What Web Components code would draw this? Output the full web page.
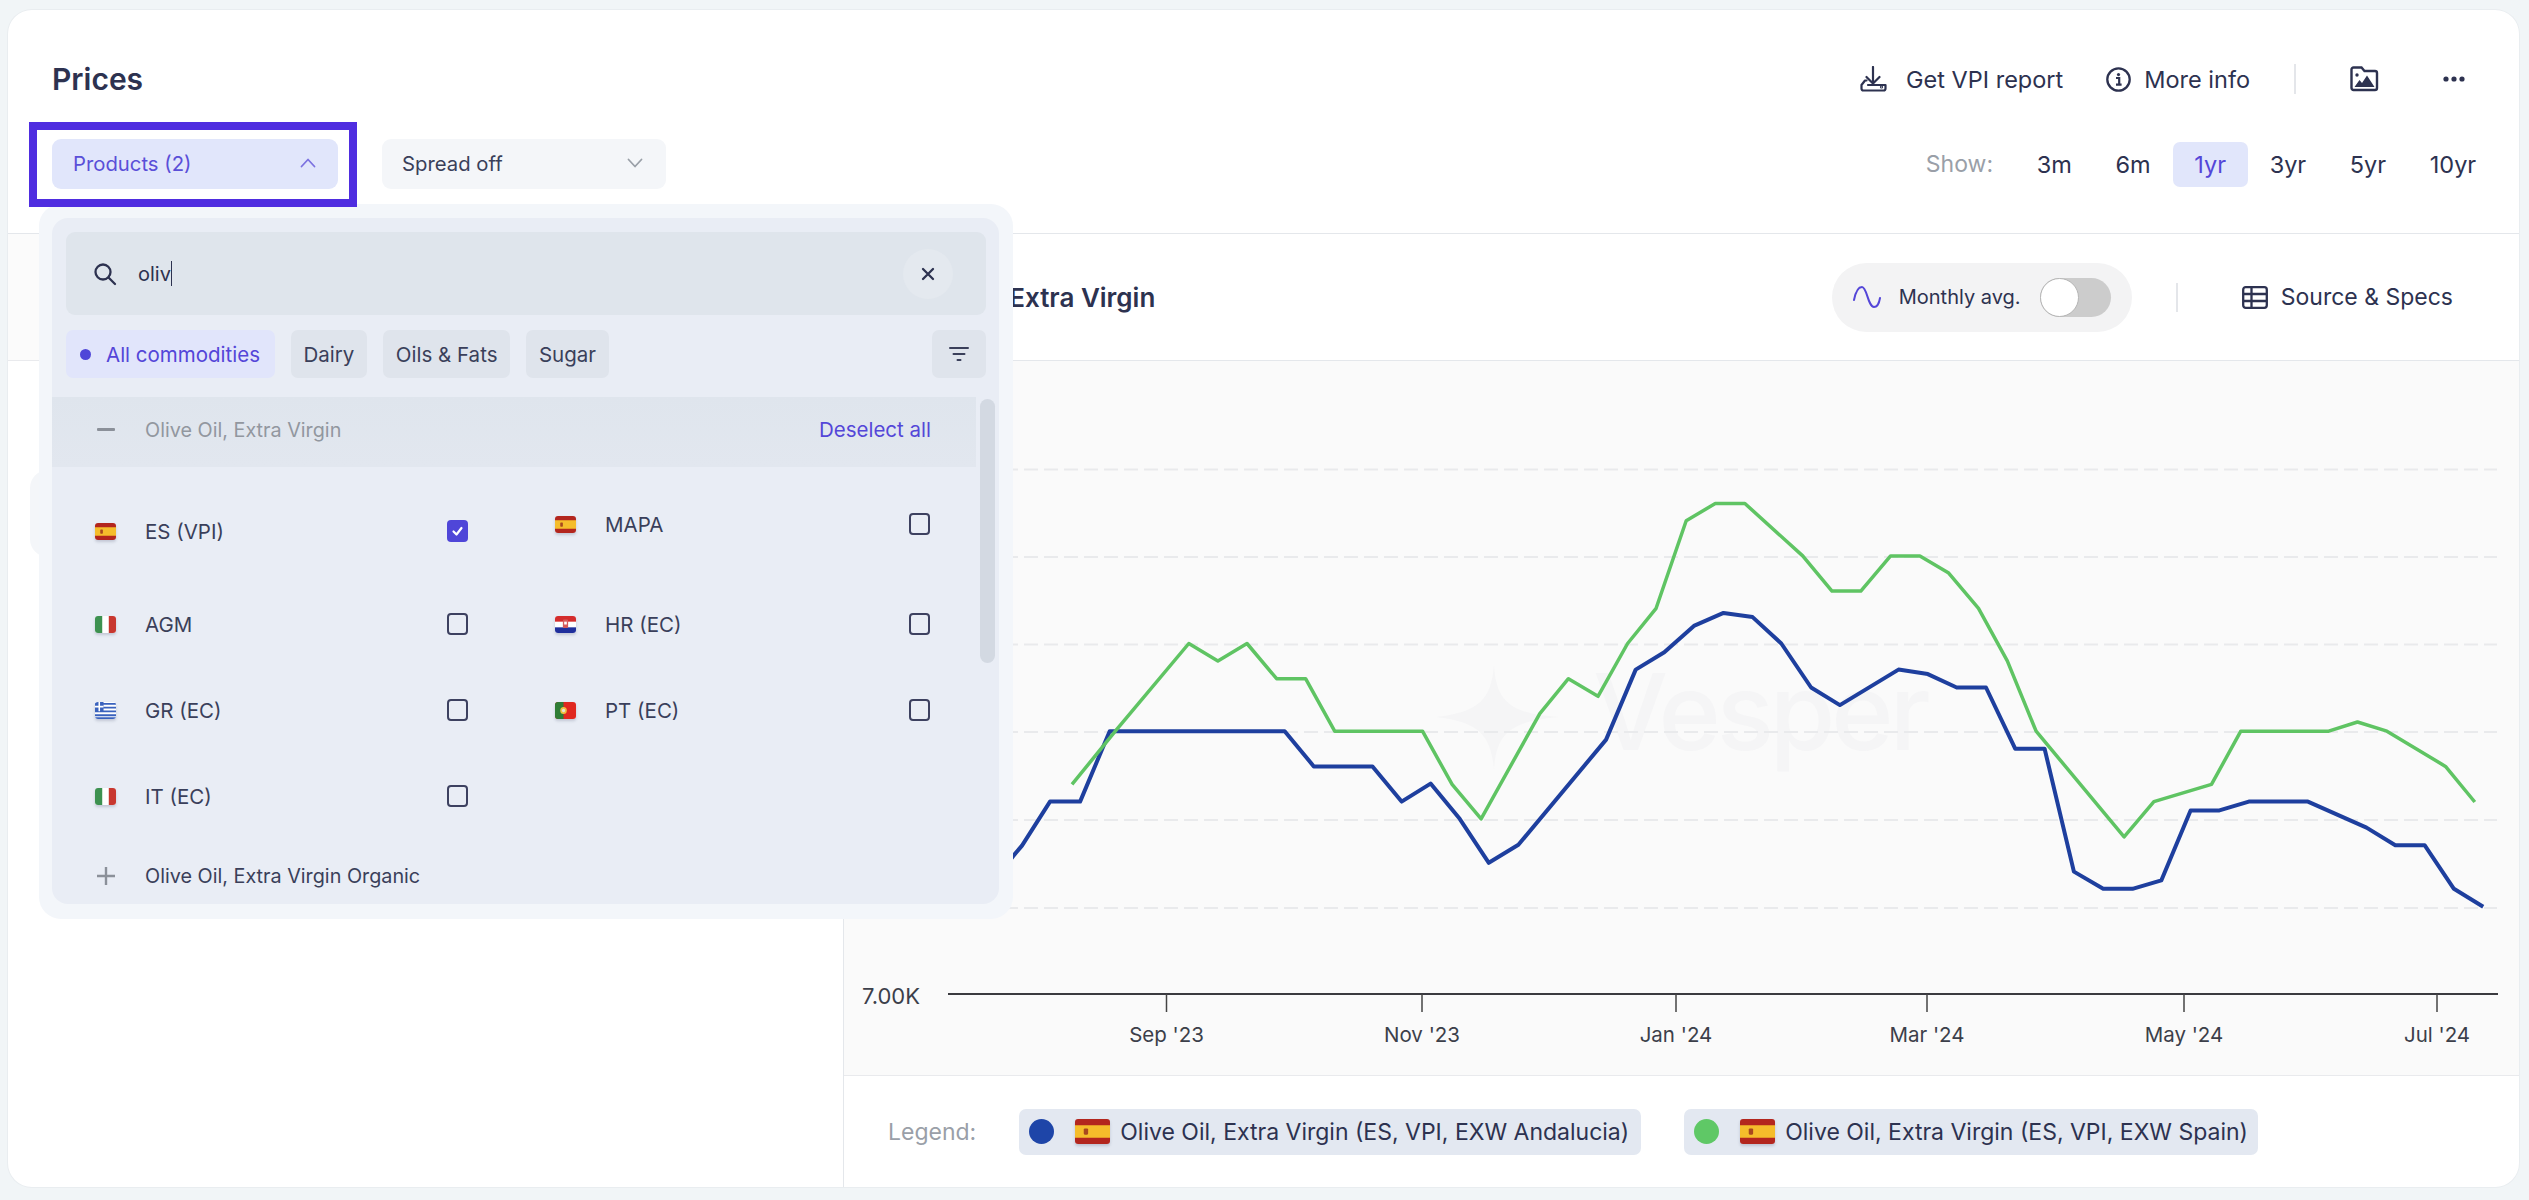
<!DOCTYPE html>
<html lang="en"><head><meta charset="utf-8"><title>Prices</title>
<style>
html,body{margin:0;padding:0}
body{background:#f1f5f7;font-family:Inter,"Noto Sans",sans-serif;color:#2d3250;width:2529px;height:1200px;overflow:hidden}
</style></head><body>
<price-app></price-app>
<script>
function def(name,html,init){
  customElements.define(name,class extends HTMLElement{
    constructor(){super();this.attachShadow({mode:'open'}).innerHTML=typeof html==='function'?html(this):html;}
    connectedCallback(){if(init&&!this._i){this._i=1;init(this);}}
  });
}
const I={
 dl:'<svg width="27" height="26" viewBox="0 0 27 26" fill="none" stroke="#2d3250" stroke-width="2.2" stroke-linecap="round" stroke-linejoin="round"><path d="M13 1v16.500M6.500 11l6.500 6.500L19.500 11"/><path d="M6.500 14.500H5L1.500 19v3.500a2 2 0 0 0 2 2h20a2 2 0 0 0 2-2V19H8"/><circle cx="21.500" cy="21" r=".5"/></svg>',
 info:'<svg width="25" height="25" viewBox="0 0 25 25" fill="none"><circle cx="12.500" cy="12.500" r="11.200" stroke="#2d3250" stroke-width="2.300"/><circle cx="12.500" cy="7.600" r="1.600" fill="#2d3250"/><path d="M10 11h3.200v6.200M10 17.600h5.600" stroke="#2d3250" stroke-width="2.200"/></svg>',
 folder:'<svg width="29" height="26" viewBox="0 0 29 26" fill="none"><path d="M1.500 3.500a2 2 0 0 1 2-2h8l3 3.500h10.500a2 2 0 0 1 2 2v15a2 2 0 0 1-2 2h-21.500a2 2 0 0 1-2-2z" stroke="#2d3250" stroke-width="2.400"/><circle cx="7" cy="9" r="1.700" fill="#2d3250"/><path d="M4.500 21l5-7 2.500 3 5-7.500 7.500 11.500z" fill="#2d3250"/></svg>',
 dots:'<svg width="22" height="6" viewBox="0 0 22 6" fill="#2d3250"><circle cx="3" cy="3" r="2.600"/><circle cx="11" cy="3" r="2.600"/><circle cx="19" cy="3" r="2.600"/></svg>',
 table:'<svg width="26" height="23" viewBox="0 0 26 23" fill="none" stroke="#2d3250" stroke-width="2.300"><rect x="1.200" y="1.200" width="23.600" height="20.600" rx="2.500"/><path d="M1 8h24M1 15h24M9.500 1.500v20"/></svg>',
 wave:'<svg width="28" height="24" viewBox="0 0 28 24" fill="none" stroke="#5446d8" stroke-width="2" stroke-linecap="round"><path d="M1 15C3 5 6 2 9 2c5 0 6 20 12 20 3 0 5-3 6-9"/></svg>',
 caret:(c,up)=>`<svg width="16" height="10" viewBox="0 0 16 10" fill="none" stroke="${c}" stroke-width="1.800" stroke-linecap="round" stroke-linejoin="round"><path d="${up?'M1.500 8.500 8 1.500l6.500 7':'M1.500 1.500 8 8.500l6.500-7'}"/></svg>`
};
const flags={
 es:'<rect width="32" height="24" fill="#b3261e"/><rect y="6" width="32" height="12" fill="#f5bd2b"/><rect x="8" y="9" width="4" height="6" rx="1" fill="#a8481f"/>',
 it:'<rect width="32" height="24" fill="#fff"/><rect width="11" height="24" fill="#3d9150"/><rect x="21" width="11" height="24" fill="#c8372f"/>',
 gr:'<rect width="32" height="24" fill="#fff"/><path d="M0 2.700h32M0 8h32M0 13.300h32M0 18.700h32M0 23h32" stroke="#3a62bd" stroke-width="2.600"/><rect width="13" height="13" fill="#3a62bd"/><path d="M6.500 0v13M0 6.500h13" stroke="#fff" stroke-width="2.400"/>',
 hr:'<rect width="32" height="24" fill="#fff"/><rect width="32" height="8" fill="#d42c2c"/><rect y="16" width="32" height="8" fill="#1f2f9c"/><rect x="12" y="5" width="8" height="12" rx="2" fill="#d65b5b"/><rect x="14" y="8" width="4" height="4" fill="#fff"/>',
 pt:'<rect width="32" height="24" fill="#e0281f"/><rect width="13" height="24" fill="#2f7d35"/><circle cx="13" cy="12" r="5" fill="#f0c040"/><circle cx="13" cy="12" r="2.500" fill="#e8e2d8"/>'
};
def('x-flag',h=>{const w=h.getAttribute('w')||21,ht=h.getAttribute('h')||17;return `<style>:host{display:block;flex:none;width:${w}px;height:${ht}px;line-height:0}
svg{display:block;border-radius:3px;box-shadow:0 2px 3px rgba(60,70,100,.22)}</style><svg width="${w}" height="${ht}" viewBox="0 0 32 24" preserveAspectRatio="none">${flags[h.getAttribute('code')]}</svg>`});
def('x-check',h=>`<style>:host{display:block;flex:none;width:21px;height:22px;box-sizing:border-box;border-radius:4px;${h.hasAttribute('checked')?'background:#4f46d8':'border:2.500px solid #3d4160'}}
svg{display:block}</style>${h.hasAttribute('checked')?'<svg width="21" height="22" viewBox="0 0 21 22" fill="none" stroke="#fff" stroke-width="2.200" stroke-linecap="round" stroke-linejoin="round"><path d="M6.500 11.500l3 3 5-6.500"/></svg>':''}`);
def('x-option',h=>`<style>:host{display:flex;align-items:center;height:100%;box-sizing:border-box;padding-top:${h.getAttribute('shift')||0}px;font-size:20.500px;color:#3a3f5a}
x-flag{margin-right:29px}.t{flex:1;white-space:nowrap}</style><x-flag code="${h.getAttribute('code')}"></x-flag><span class="t"><slot></slot></span><x-check ${h.hasAttribute('checked')?'checked':''}></x-check>`);
def('x-chip',h=>{const a=h.hasAttribute('active');return `<style>:host{display:flex;align-items:center;height:48px;box-sizing:border-box;padding:0 ${a?15:13}px 0 ${a?14:13}px;border-radius:7px;font-size:20.500px;white-space:nowrap;background:${a?'#e1e5fb':'#dfe4ec'};color:${a?'#5446d8':'#3a3f5a'}}
i{width:11px;height:11px;border-radius:50%;background:#4f46d8;margin-right:15px}</style>${a?'<i></i>':''}<slot></slot>`});
def('x-range',h=>{const a=h.hasAttribute('active');return `<style>:host{display:flex;align-items:center;height:45px;padding:0 21.800px;border-radius:7px;font-size:23.500px;white-space:nowrap;background:${a?'#e1e6fb':'transparent'};color:${a?'#5446d8':'#2d3250'}}</style><slot></slot>`});
def('x-select',h=>{const a=h.hasAttribute('active');return `<style>:host{display:flex;position:relative;align-items:center;justify-content:space-between;box-sizing:border-box;width:${a?286:284}px;height:50px;padding:0 ${a?22:23}px 2px ${a?21:20}px;border-radius:9px;font-size:20.300px;white-space:nowrap;background:${a?'#e1e6fb':'#f4f6f9'};color:${a?'#5a4fd8':'#3a3f5a'}}
.hl{position:absolute;left:-23px;top:-17px;right:-19px;bottom:-18px;border:8px solid #4f2de0;pointer-events:none}</style><span><slot></slot></span>${I.caret(a?'#7c72e0':'#9aa0a8',a)}${a?'<div class="hl"></div>':''}`});
def('x-legend',h=>`<style>:host{display:flex;align-items:center;height:46px;box-sizing:border-box;padding:0 ${h.getAttribute('pr')||12}px 0 10px;border-radius:7px;background:#e3e8f1;font-size:23px;color:#2d3250;white-space:nowrap}
i{width:25px;height:25px;border-radius:50%;background:${h.getAttribute('color')};margin-right:21px}x-flag{margin-right:10px}</style><i></i><x-flag code="es" w="35" h="25"></x-flag><slot></slot>`);

def('x-header',`<style>:host{display:block;position:relative;z-index:6;height:223px;box-sizing:border-box;padding-top:44px}
.r1{display:flex;align-items:center;height:50px;padding:0 54px 0 44px}
h1{margin:0;font-size:30px;font-weight:600;color:#2d3250;flex:1}
.a{display:flex;align-items:center;font-size:23.500px;white-space:nowrap}
.div{width:2px;height:30px;background:#e4e6ea}
.r2{display:flex;align-items:center;justify-content:space-between;height:50px;margin-top:35px;padding:0 0 0 44px}
.l{display:flex;gap:44px}.rr{display:flex;align-items:center;padding-right:21px}
.show{font-size:23px;color:#9a9fa8;margin-right:22px}
svg{display:block}
</style>
<div class="r1"><h1>Prices</h1>
 <span class="a" style="gap:19px">${I.dl}<span>Get VPI report</span></span>
 <span class="a" style="gap:13px;margin-left:43px">${I.info}<span>More info</span></span>
 <span class="div" style="margin-left:44px"></span>
 <span style="margin-left:54px">${I.folder}</span>
 <span style="margin-left:64px">${I.dots}</span>
</div>
<div class="r2"><div class="l"><x-select active>Products (2)</x-select><x-select>Spread off</x-select></div>
 <div class="rr"><span class="show">Show:</span><x-range>3m</x-range><x-range>6m</x-range><x-range active>1yr</x-range><x-range>3yr</x-range><x-range>5yr</x-range><x-range>10yr</x-range></div></div>`);

def('x-dropdown',`<style>:host{display:block;position:absolute;left:31px;top:194px;width:974px;height:715px;box-sizing:border-box;padding:14px 14px 15px 13px;border-radius:22px;background:#f3f6fa;z-index:5}
.in{position:relative;height:100%;box-sizing:border-box;padding:14px 13px 0 14px;background:#e9edf5;border-radius:16px;overflow:hidden;font-size:19.800px;color:#3a3f5a}
.search{display:flex;align-items:center;height:83px;border-radius:9px;background:#dfe5ec;padding:0 33px 0 27px;font-size:20px;color:#2d3250}
.q{margin-left:21px;display:flex;align-items:center}.q i{display:block;width:1.500px;height:25px;background:#2d3250}
.x{margin-left:auto;width:50px;height:50px;border-radius:50%;background:#e4e9ef;display:flex;align-items:center;justify-content:center}
.chips{display:flex;gap:15.500px;margin-top:15px}.f{margin-left:auto;width:54px;height:48px;border-radius:7px;background:#dfe4ec;display:flex;align-items:center;justify-content:center}
.group{margin:19px 10px 0 -14px}
.gh{display:flex;align-items:center;justify-content:space-between;box-sizing:border-box;height:70px;padding:0 45px 5px 45px;background:linear-gradient(#dfe5ed,#e2e7ef)}
.gh .n{display:flex;align-items:center;gap:30px;color:#92979f;}.gh .d{color:#5446d8;font-size:20.500px}
.grid{display:grid;grid-template-columns:373px 375px;grid-template-rows:114px 86px 86px 86px;column-gap:87px;padding-left:43px}
.more{display:flex;align-items:center;gap:30px;height:56px;padding:9px 0 0 45px;color:#3a3f5a}
.sb{position:absolute;left:928px;top:181px;width:15px;height:264px;border-radius:8px;background:#d3d9e2}
svg{display:block}
</style><div class="in">
<div class="search"><svg width="24" height="24" viewBox="0 0 24 24" fill="none" stroke="#2d3250" stroke-width="2.300" stroke-linecap="round"><circle cx="10" cy="10" r="7.500"/><path d="M15.500 15.500 22 22"/></svg><span class="q">oliv<i></i></span>
 <span class="x"><svg width="14" height="14" viewBox="0 0 14 14" stroke="#2d3250" stroke-width="2.300" stroke-linecap="round"><path d="M2 2l10 10M12 2 2 12"/></svg></span></div>
<div class="chips"><x-chip active>All commodities</x-chip><x-chip>Dairy</x-chip><x-chip>Oils &amp; Fats</x-chip><x-chip>Sugar</x-chip>
 <span class="f"><svg width="20" height="16" viewBox="0 0 20 16" stroke="#3a3f5a" stroke-width="2" stroke-linecap="round"><path d="M1 2h18M4.500 8h11M8.500 14h3"/></svg></span></div>
<div class="group"><div class="gh"><span class="n"><svg width="18" height="4" viewBox="0 0 18 4"><rect width="18" height="3" y="0" rx="1" fill="#8b9099"/></svg><span>Olive Oil, Extra Virgin</span></span><span class="d">Deselect all</span></div>
<div class="grid">
<x-option code="es" checked shift="14">ES (VPI)</x-option><x-option code="es">MAPA</x-option>
<x-option code="it">AGM</x-option><x-option code="hr">HR (EC)</x-option>
<x-option code="gr">GR (EC)</x-option><x-option code="pt">PT (EC)</x-option>
<x-option code="it">IT (EC)</x-option><span></span>
</div>
<div class="more"><svg width="18" height="18" viewBox="0 0 18 18" stroke="#8b9099" stroke-width="2.400"><path d="M9 0v18M0 9h18"/></svg><span>Olive Oil, Extra Virgin Organic</span></div>
</div><div class="sb"></div></div>`);

const Z5=(a)=>a.map(([x,y])=>[1000+x/1.96,350+y/2.613]);
const Z6=(a)=>a.map(([x,y])=>[1750+x/2.013,350+y/2.613]);
const pts=a=>a.map(p=>p[0].toFixed(1)+','+p[1].toFixed(1)).join(' ');
const green=[...Z5([[143,1135],[228,996],[372,767],[429,813],[486,767],[544,859],[601,859],[658,996],[830,996],[888,1135],[945,1225],[1060,950],[1116,859],[1174,905],[1232,767],[1288,675],[1347,446],[1404,401],[1462,401]]),...Z6([[108,538],[167,630],[225,630],[285,538],[344,538],[402,583],[462,675],[520,812],[578,996],[755,1272],[815,1180],[931,1135],[990,996],[1167,996],[1225,972],[1284,996],[1402,1088],[1461,1181]])];
const blue=[...Z5([[0,1370],[28,1322],[45,1295],[100,1180],[159,1180],[217,996],[560,996],[617,1088],[732,1088],[789,1180],[846,1133],[903,1225],[960,1340],[1018,1293],[1190,1018],[1248,835],[1304,790],[1362,721],[1420,687],[1477,698]]),...Z6([[65,767],[125,882],[183,928],[301,835],[360,847],[418,882],[477,882],[536,1042],[595,1042],[654,1363],[713,1408],[772,1408],[830,1386],[889,1203],[947,1203],[1006,1180],[1125,1180],[1243,1248],[1301,1294],[1360,1294],[1419,1408],[1478,1455]])];
const grid=[469.5,557,644.5,732,820,908].map(y=>`<line x1="845" x2="2498" y1="${y}" y2="${y}" stroke="#e9eaec" stroke-width="2" stroke-dasharray="14 6"/>`).join('');
const ticks=[[1167.5,"Sep '23"],[1423,"Nov '23"],[1677,"Jan '24"],[1928,"Mar '24"],[2185,"May '24"],[2438,"Jul '24"]].map(([x,t])=>`<line x1="${x}" x2="${x}" y1="994" y2="1012" stroke="#444" stroke-width="1.500"/><text x="${x}" y="1042" text-anchor="middle">${t}</text>`).join('');
def('x-chart',`<style>:host{display:block;position:relative;height:715px;background:#fafafa;border-bottom:1px solid #e9eaed;box-sizing:border-box}
svg{position:absolute;left:0;top:0;display:block}text{font-family:Inter,"Noto Sans",sans-serif}</style>
<svg width="1674" height="714" viewBox="845 361 1674 714" font-size="20.500" fill="#3c3f4a">
<path d="M1495 665C1497 700 1510 714 1560 717 1510 721 1497 735 1495 770 1492 735 1480 722 1437 717 1480 712 1492 700 1495 665Z" fill="#f5f5f6"/>
<text x="1594" y="750" font-size="106" font-weight="500" letter-spacing="-4" fill="#f5f5f6">Vesper</text>
${grid}
<polyline points="${pts(blue)}" fill="none" stroke="#1e3f9e" stroke-width="4" stroke-linejoin="round"/>
<polyline points="${pts(green)}" fill="none" stroke="#5fc463" stroke-width="3.500" stroke-linejoin="round"/>
<line x1="949" x2="2499" y1="994" y2="994" stroke="#3a3a3f" stroke-width="2"/>${ticks}
<text x="863" y="1004" font-size="22">7.00K</text></svg>`);

def('x-right',`<style>:host{display:flex;flex-direction:column;flex:1;min-width:0}
.top{display:flex;align-items:center;height:127px;box-sizing:border-box;border-bottom:1px solid #e4e7eb;padding:0 66px 0 47px;font-size:23px}
h2{margin:0;flex:1;font-size:26px;font-weight:600;color:#2d3250;white-space:nowrap}
.pill{display:flex;align-items:center;box-sizing:border-box;width:300px;height:69px;padding:0 21px;border-radius:35px;background:#f3f3f4;font-size:20px;white-space:nowrap}
.tg{position:relative;margin-left:auto;width:71px;height:39px;border-radius:20px;background:#cccccc}
.tg i{position:absolute;left:0;top:0;width:39px;height:39px;box-sizing:border-box;border-radius:50%;background:#fff;border:1px solid #b5b5b5}
.dv{width:2px;height:29px;background:#e4e6ea;margin:0 64px 0 44px}
.s{display:flex;align-items:center;gap:13px;white-space:nowrap}
.lg{display:flex;align-items:center;flex:1;padding-left:44px;gap:43px}
.lb{font-size:23px;color:#9a9fa8;margin-right:0}
svg{display:block}</style>
<div class="top"><h2>Olive Oil, Extra Virgin</h2><div class="pill">${I.wave}<span style="margin-left:18px">Monthly avg.</span><span class="tg"><i></i></span></div><span class="dv"></span><span class="s">${I.table}<span>Source &amp; Specs</span></span></div>
<x-chart></x-chart>
<div class="lg"><span class="lb">Legend:</span><x-legend color="#1e45a8">Olive Oil, Extra Virgin (ES, VPI, EXW Andalucia)</x-legend><x-legend color="#5fc866" pr="10">Olive Oil, Extra Virgin (ES, VPI, EXW Spain)</x-legend></div>`);

def('x-left',`<style>:host{display:block;flex:none;width:836px;border-right:1px solid #e4e7eb;box-sizing:border-box}
.band{height:127px;box-sizing:border-box;background:#fbfbfb;border-bottom:1px solid #e9eaed}
.c{height:87px;margin:109px 0 0 22px;border-radius:18px;background:#f4f6f9}</style><div class="band"></div><div class="c"></div>`);

def('price-app',`<style>:host{display:block;position:relative;box-sizing:border-box;width:2511px;height:1177px;margin:10px 0 0 8px;background:#fff;border-radius:24px;box-shadow:0 0 0 1px #e9edf0}
.b{display:flex;height:954px;box-sizing:border-box;border-top:1px solid #e4e7eb}</style>
<x-header></x-header><div class="b"><x-left></x-left><x-right></x-right></div><x-dropdown></x-dropdown>`);
</script>
</body></html>
